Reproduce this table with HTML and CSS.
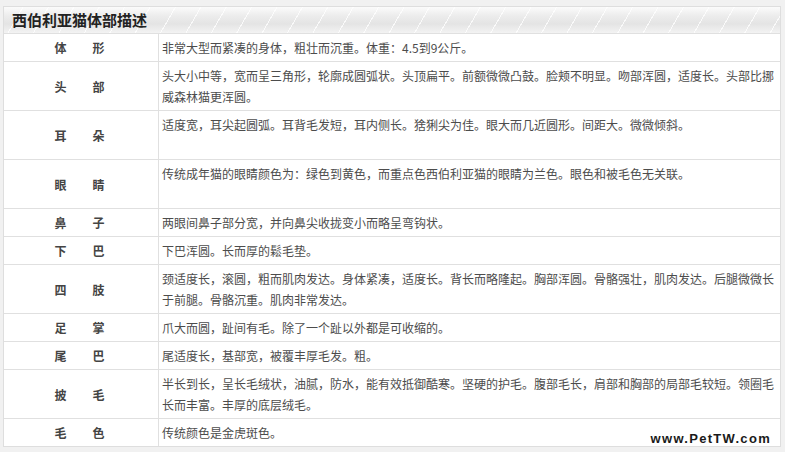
FILE: index.html
```html
<!DOCTYPE html>
<html lang="zh">
<head>
<meta charset="utf-8">
<title>西伯利亚猫体部描述</title>
<link rel="stylesheet" href="styles.css">
</head>
<body>
<div class="box">
  <div class="head">西伯利亚猫体部描述</div>
  <div class="row"><div class="label"><span>体</span><span>形</span></div><div class="desc">非常大型而紧凑的身体，粗壮而沉重。体重：4.5到9公斤。</div></div>
  <div class="row"><div class="label"><span>头</span><span>部</span></div><div class="desc">头大小中等，宽而呈三角形，轮廓成圆弧状。头顶扁平。前额微微凸鼓。脸颊不明显。吻部浑圆，适度长。头部比挪<br>威森林猫更浑圆。</div></div>
  <div class="row tall"><div class="label"><span>耳</span><span>朵</span></div><div class="desc">适度宽，耳尖起圆弧。耳背毛发短，耳内侧长。猞猁尖为佳。眼大而几近圆形。间距大。微微倾斜。</div></div>
  <div class="row tall"><div class="label"><span>眼</span><span>睛</span></div><div class="desc">传统成年猫的眼睛颜色为：绿色到黄色，而重点色西伯利亚猫的眼睛为兰色。眼色和被毛色无关联。</div></div>
  <div class="row"><div class="label"><span>鼻</span><span>子</span></div><div class="desc">两眼间鼻子部分宽，并向鼻尖收拢变小而略呈弯钩状。</div></div>
  <div class="row"><div class="label"><span>下</span><span>巴</span></div><div class="desc">下巴浑圆。长而厚的鬆毛垫。</div></div>
  <div class="row"><div class="label"><span>四</span><span>肢</span></div><div class="desc">颈适度长，滚圆，粗而肌肉发达。身体紧凑，适度长。背长而略隆起。胸部浑圆。骨骼强壮，肌肉发达。后腿微微长<br>于前腿。骨骼沉重。肌肉非常发达。</div></div>
  <div class="row"><div class="label"><span>足</span><span>掌</span></div><div class="desc">爪大而圆，趾间有毛。除了一个趾以外都是可收缩的。</div></div>
  <div class="row"><div class="label"><span>尾</span><span>巴</span></div><div class="desc">尾适度长，基部宽，被覆丰厚毛发。粗。</div></div>
  <div class="row"><div class="label"><span>披</span><span>毛</span></div><div class="desc">半长到长，呈长毛绒状，油腻，防水，能有效抵御酷寒。坚硬的护毛。腹部毛长，肩部和胸部的局部毛较短。领圈毛<br>长而丰富。丰厚的底层绒毛。</div></div>
  <div class="row"><div class="label"><span>毛</span><span>色</span></div><div class="desc">传统颜色是金虎斑色。</div></div>
  <div class="mark">www.PetTW.com</div>
</div>
</body>
</html>
```

FILE: styles.css
```css
html, body {
  margin: 0;
  padding: 0;
}
body {
  background: #f1f1f1;
  padding: 6px 4px 0 3px;
  height: 452px;
  box-sizing: border-box;
  font-family: "Noto Sans CJK SC", "Noto Sans", sans-serif;
  font-size: 12px;
  color: #4a4a4a;
}
.box {
  position: relative;
  width: 778px;
  box-sizing: border-box;
  border: 1px solid #dedede;
  background: #fff;
}
.head {
  height: 26px;
  box-sizing: border-box;
  padding-left: 8px;
  line-height: 26px;
  font-size: 15px;
  font-weight: bold;
  color: #222;
  background:
    repeating-linear-gradient(120deg, rgba(255,255,255,0) 0 16px, rgba(255,255,255,0.8) 16px 17px, rgba(255,255,255,0) 17px 22px),
    linear-gradient(#fbfbfb 0%, #ececec 35%, #e4e4e4 65%, #f3f3f3 100%);
}
.row {
  display: flex;
  border-top: 1px solid #e0e0e0;
}
.label {
  width: 155px;
  flex: none;
  border-right: 1px solid #e0e0e0;
  display: flex;
  justify-content: center;
  align-items: center;
  gap: 26px;
  font-weight: bold;
  color: #444;
  padding-right: 3px;
  box-sizing: border-box;
}
.desc {
  flex: 1;
  padding: 3px 3px 3px 3px;
  line-height: 21px;
  white-space: nowrap;
  color: #4c4c4c;
}
.tall .desc {
  height: 48px;
  box-sizing: border-box;
}
.mark {
  position: absolute;
  right: 9px;
  bottom: 0px;
  font-family: "Liberation Sans", Arial, sans-serif;
  font-weight: bold;
  font-size: 13px;
  letter-spacing: 1.3px;
  line-height: 14px;
  color: #1a1a1a;
}
```
